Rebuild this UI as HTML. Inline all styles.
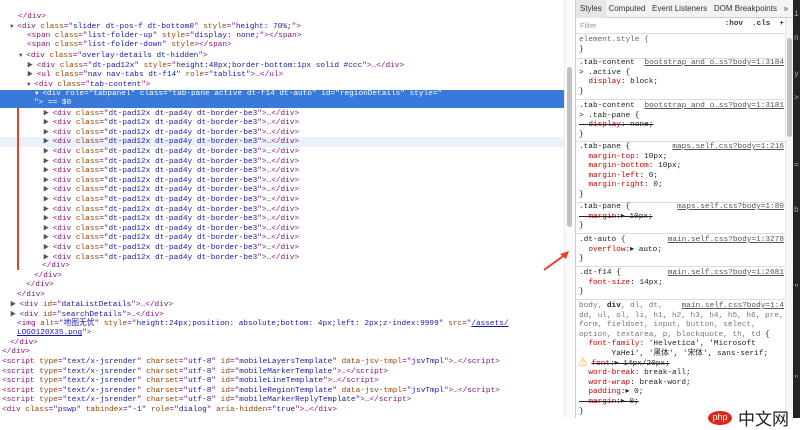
<!DOCTYPE html>
<html><head><meta charset="utf-8"><style>
*{margin:0;padding:0;box-sizing:border-box}
body{width:800px;height:418px;overflow:hidden;background:#fff;position:relative;font-family:"Liberation Mono","Noto Sans CJK SC",monospace;font-size:7.75px}
.l{position:absolute;white-space:pre;line-height:9.6px;height:9.6px;color:#881280}
.t{color:#881280}.a{color:#994500}.v{color:#1a1aa6}.g{color:#888}
.tri{color:#555;font-size:6px}
.hl{position:absolute;left:0;top:90px;width:564px;height:18px;background:#3879d9}
.sp{position:absolute;left:575px;top:0;width:218px;height:418px;background:#fff;border-left:1px solid #ccc}
.s{position:absolute;white-space:pre;line-height:9.6px;left:3px;color:#222}
.p{color:#c80000}
.lk{position:absolute;right:9px;color:#555;text-decoration:underline;white-space:pre;line-height:9.6px}
.sep{position:absolute;left:0;width:209px;height:1px;background:#ddd}
.st{text-decoration:line-through}
.sans{font-family:"Liberation Sans",sans-serif}
</style></head><body>
<div style="position:absolute;left:0;top:137px;width:564px;height:10px;background:#eaf1fb"></div>
<div class="hl"></div>
<div class="l" style="left:18px;top:-6px"><span class="t">&lt;div class="mobile-notice"&gt;</span></div>
<div class="l" style="left:18px;top:12.5px">&lt;/div&gt;</div>
<div class="l" style="left:10px;top:22px"><span class="tri">▼ </span>&lt;div <span class="a">class</span>="<span class="v">slider dt-pos-f dt-bottom0</span>" <span class="a">style</span>="<span class="v">height: 70%;</span>"&gt;</div>
<div class="l" style="left:27px;top:31.7px">&lt;span <span class="a">class</span>="<span class="v">list-folder-up</span>" <span class="a">style</span>="<span class="v">display: none;</span>"&gt;&lt;/span&gt;</div>
<div class="l" style="left:27px;top:41.3px">&lt;span <span class="a">class</span>="<span class="v">list-folder-down</span>" <span class="a">style</span>&gt;&lt;/span&gt;</div>
<div class="l" style="left:19px;top:50.9px"><span class="tri">▼ </span>&lt;div <span class="a">class</span>="<span class="v">overlay-details dt-hidden</span>"&gt;</div>
<div class="l" style="left:27px;top:60.5px"><span class="tri">▶ </span>&lt;div <span class="a">class</span>="<span class="v">dt-pad12x</span>" <span class="a">style</span>="<span class="v">height:48px;border-bottom:1px solid #ccc</span>"&gt;…&lt;/div&gt;</div>
<div class="l" style="left:27px;top:70.1px"><span class="tri">▶ </span>&lt;ul <span class="a">class</span>="<span class="v">nav nav-tabs dt-f14</span>" <span class="a">role</span>="<span class="v">tablist</span>"&gt;…&lt;/ul&gt;</div>
<div class="l" style="left:27px;top:79.7px"><span class="tri">▼ </span>&lt;div <span class="a">class</span>="<span class="v">tab-content</span>"&gt;</div>
<div class="l" style="left:35px;top:89.3px;color:#fff"><span class="tri" style="color:#fff">▼ </span>&lt;div role="tabpanel" class="tab-pane active dt-f14 dt-auto" id="regionDetails" style="</div>
<div class="l" style="left:34px;top:98.9px;color:#fff">"&gt; == $0</div>
<div style="position:absolute;left:17px;top:108px;width:2px;height:162px;background:#e8412c"></div>
<div id="rows"></div>
<script>
var h='';for(var i=0;i<16;i++){h+='<div class="l" style="left:43px;top:'+(108.5+9.6*i)+'px"><span class="tri">▶ </span>&lt;div <span class="a">class</span>="<span class="v">dt-pad12x dt-pad4y dt-border-be3</span>"&gt;…&lt;/div&gt;</div>';}
document.getElementById('rows').innerHTML=h;
</script>
<div class="l" style="left:42px;top:262px">&lt;/div&gt;</div>
<div class="l" style="left:34px;top:271.6px">&lt;/div&gt;</div>
<div class="l" style="left:26px;top:281.2px">&lt;/div&gt;</div>
<div class="l" style="left:17px;top:290.8px">&lt;/div&gt;</div>
<div class="l" style="left:10px;top:300.4px"><span class="tri">▶ </span>&lt;div <span class="a">id</span>="<span class="v">dataListDetails</span>"&gt;…&lt;/div&gt;</div>
<div class="l" style="left:10px;top:310px"><span class="tri">▶ </span>&lt;div <span class="a">id</span>="<span class="v">searchDetails</span>"&gt;…&lt;/div&gt;</div>
<div class="l" style="left:17px;top:319.6px">&lt;img <span class="a">alt</span>="<span class="v">地图无忧</span>" <span class="a">style</span>="<span class="v">height:24px;position: absolute;bottom: 4px;left: 2px;z-index:9999</span>" <span class="a">src</span>="<span class="v" style="text-decoration:underline">/assets/</span></div>
<div class="l" style="left:17px;top:329.2px"><span class="v" style="text-decoration:underline">LOGO120X35.png</span>"&gt;</div>
<div class="l" style="left:10px;top:338.8px">&lt;/div&gt;</div>
<div class="l" style="left:2px;top:348.4px">&lt;/div&gt;</div>
<div class="l" style="left:2px;top:358px">&lt;script <span class="a">type</span>="<span class="v">text/x-jsrender</span>" <span class="a">charset</span>="<span class="v">utf-8</span>" <span class="a">id</span>="<span class="v">mobileLayersTemplate</span>" <span class="a">data-jsv-tmpl</span>="<span class="v">jsvTmpl</span>"&gt;…&lt;/script&gt;</div>
<div class="l" style="left:2px;top:367.6px">&lt;script <span class="a">type</span>="<span class="v">text/x-jsrender</span>" <span class="a">charset</span>="<span class="v">utf-8</span>" <span class="a">id</span>="<span class="v">mobileMarkerTemplate</span>"&gt;…&lt;/script&gt;</div>
<div class="l" style="left:2px;top:377.2px">&lt;script <span class="a">type</span>="<span class="v">text/x-jsrender</span>" <span class="a">charset</span>="<span class="v">utf-8</span>" <span class="a">id</span>="<span class="v">mobileLineTemplate</span>"&gt;…&lt;/script&gt;</div>
<div class="l" style="left:2px;top:386.8px">&lt;script <span class="a">type</span>="<span class="v">text/x-jsrender</span>" <span class="a">charset</span>="<span class="v">utf-8</span>" <span class="a">id</span>="<span class="v">mobileRegionTemplate</span>" <span class="a">data-jsv-tmpl</span>="<span class="v">jsvTmpl</span>"&gt;…&lt;/script&gt;</div>
<div class="l" style="left:2px;top:396.4px">&lt;script <span class="a">type</span>="<span class="v">text/x-jsrender</span>" <span class="a">charset</span>="<span class="v">utf-8</span>" <span class="a">id</span>="<span class="v">mobileMarkerReplyTemplate</span>"&gt;…&lt;/script&gt;</div>
<div class="l" style="left:2px;top:406px">&lt;div <span class="a">class</span>="<span class="v">pswp</span>" <span class="a">tabindex</span>="<span class="v">-1</span>" <span class="a">role</span>="<span class="v">dialog</span>" <span class="a">aria-hidden</span>="<span class="v">true</span>"&gt;…&lt;/div&gt;</div>
<div style="position:absolute;left:564px;top:0;width:11px;height:418px;background:#fafafa;border-left:1px solid #eee"></div>
<div style="position:absolute;left:567px;top:67px;width:5px;height:160px;background:#c1c1c1;border-radius:3px"></div>
<svg style="position:absolute;left:540px;top:248px" width="32" height="26"><line x1="4" y1="22" x2="26" y2="6" stroke="#e8412c" stroke-width="2"/><path d="M29 3 L20 6 L26 11 Z" fill="#e8412c"/></svg>
<div class="sp">
<div style="position:absolute;left:0;top:0;width:218px;height:18px;background:#f3f3f3;border-bottom:1px solid #ccc"></div>
<div style="position:absolute;left:0;top:0;width:30px;height:18px;background:#e6e6e6"></div>
<div class="sans" style="position:absolute;left:4px;top:4px;font-size:8px;color:#333;white-space:pre">Styles   Computed   Event Listeners   DOM Breakpoints   »</div>
<div class="sans" style="position:absolute;left:4px;top:21px;font-size:7.5px;color:#999">Filter</div>
<div style="position:absolute;right:9px;top:20px;font-size:7.6px;color:#333;white-space:pre;font-weight:bold">:hov  .cls  +</div>
<div class="sep" style="top:33px"></div>
<div class="s g" style="top:36px;color:#666">element.style {</div>
<div class="s" style="top:46px">}</div>
<div class="sep" style="top:58px"></div>
<div class="s" style="top:59px">.tab-content</div><div class="lk" style="top:59px">bootstrap and o…ss?body=1:3184</div>
<div class="s" style="top:68.6px">&gt; .active {</div>
<div class="s" style="top:78.2px">  <span class="p">display</span>: block;</div>
<div class="s" style="top:87.8px">}</div>
<div class="sep" style="top:99px"></div>
<div class="s" style="top:102px">.tab-content</div><div class="lk" style="top:102px">bootstrap and o…ss?body=1:3181</div>
<div class="s" style="top:111.6px">&gt; .tab-pane {</div>
<div class="s st" style="top:121.2px">  <span class="p">display</span>: none;</div>
<div class="s" style="top:130.8px">}</div>
<div class="sep" style="top:141px"></div>
<div class="s" style="top:143px">.tab-pane {</div><div class="lk" style="top:143px">maps.self.css?body=1:216</div>
<div class="s" style="top:152.6px">  <span class="p">margin-top</span>: 10px;</div>
<div class="s" style="top:162.2px">  <span class="p">margin-bottom</span>: 10px;</div>
<div class="s" style="top:171.8px">  <span class="p">margin-left</span>: 0;</div>
<div class="s" style="top:181.4px">  <span class="p">margin-right</span>: 0;</div>
<div class="s" style="top:191px">}</div>
<div class="sep" style="top:202px"></div>
<div class="s" style="top:203px">.tab-pane {</div><div class="lk" style="top:203px">maps.self.css?body=1:80</div>
<div class="s st" style="top:212.6px">  <span class="p">margin</span>:▸ 10px;</div>
<div class="s" style="top:222.2px">}</div>
<div class="sep" style="top:233px"></div>
<div class="s" style="top:236px">.dt-auto {</div><div class="lk" style="top:236px">main.self.css?body=1:3278</div>
<div class="s" style="top:245.6px">  <span class="p">overflow</span>:▸ auto;</div>
<div class="s" style="top:255.2px">}</div>
<div class="sep" style="top:266px"></div>
<div class="s" style="top:269px">.dt-f14 {</div><div class="lk" style="top:269px">main.self.css?body=1:2681</div>
<div class="s" style="top:278.6px">  <span class="p">font-size</span>: 14px;</div>
<div class="s" style="top:288.2px">}</div>
<div class="sep" style="top:299px"></div>
<div class="s" style="top:302px;color:#777">body, <b style="color:#222">div</b>, dl, dt,</div><div class="lk" style="top:302px">main.self.css?body=1:4</div>
<div class="s" style="top:311.6px;color:#777">dd, ul, ol, li, h1, h2, h3, h4, h5, h6, pre,</div>
<div class="s" style="top:321.2px;color:#777">form, fieldset, input, button, select,</div>
<div class="s" style="top:330.8px;color:#777">option, textarea, p, blockquote, th, td <span style="color:#222">{</span></div>
<div class="s" style="top:340.4px">  <span class="p">font-family</span>: 'Helvetica', 'Microsoft</div>
<div class="s" style="top:350px">       YaHei', '黑体', '宋体', sans-serif;</div>
<div class="s" style="top:359.6px"><span style="color:#e8a300">⚠</span> <span class="st"><span class="p">font</span>:▸ 14px/20px;</span></div>
<div class="s" style="top:369.2px">  <span class="p">word-break</span>: break-all;</div>
<div class="s" style="top:378.8px">  <span class="p">word-wrap</span>: break-word;</div>
<div class="s" style="top:388.4px">  <span class="p">padding</span>:▸ 0;</div>
<div class="s st" style="top:398px">  <span class="p">margin</span>:▸ 0;</div>
<div class="s" style="top:407.6px">}</div>
<div style="position:absolute;left:209px;top:18px;width:9px;height:400px;background:#f5f5f5;border-left:1px solid #e5e5e5"></div>
<div style="position:absolute;left:211px;top:38px;width:5px;height:99px;background:#c1c1c1;border-radius:3px"></div>
</div>
<div style="position:absolute;left:708px;top:411px;width:24px;height:14px;border-radius:50%;background:#e0261b;color:#fff;font-family:'Liberation Sans',sans-serif;font-size:9px;text-align:center;line-height:12px">php</div>
<div style="position:absolute;left:738px;top:409px;font-family:'Noto Sans CJK SC',sans-serif;font-size:17px;color:#222;line-height:18px">中文网</div>
<div style="position:absolute;left:793px;top:0;width:7px;height:418px;background:#242424;overflow:hidden;color:#aaa;font-size:8px;line-height:9.6px">
<div style="position:absolute;top:10px;left:1px">i</div><div style="position:absolute;top:34px;left:1px">n</div><div style="position:absolute;top:70px;left:1px">y</div><div style="position:absolute;top:94px;left:1px">&gt;</div><div style="position:absolute;top:161px;left:1px">=</div><div style="position:absolute;top:206px;left:1px">b</div><div style="position:absolute;top:284px;left:1px">"</div><div style="position:absolute;top:375px;left:1px">"</div>
</div>
</body></html>
